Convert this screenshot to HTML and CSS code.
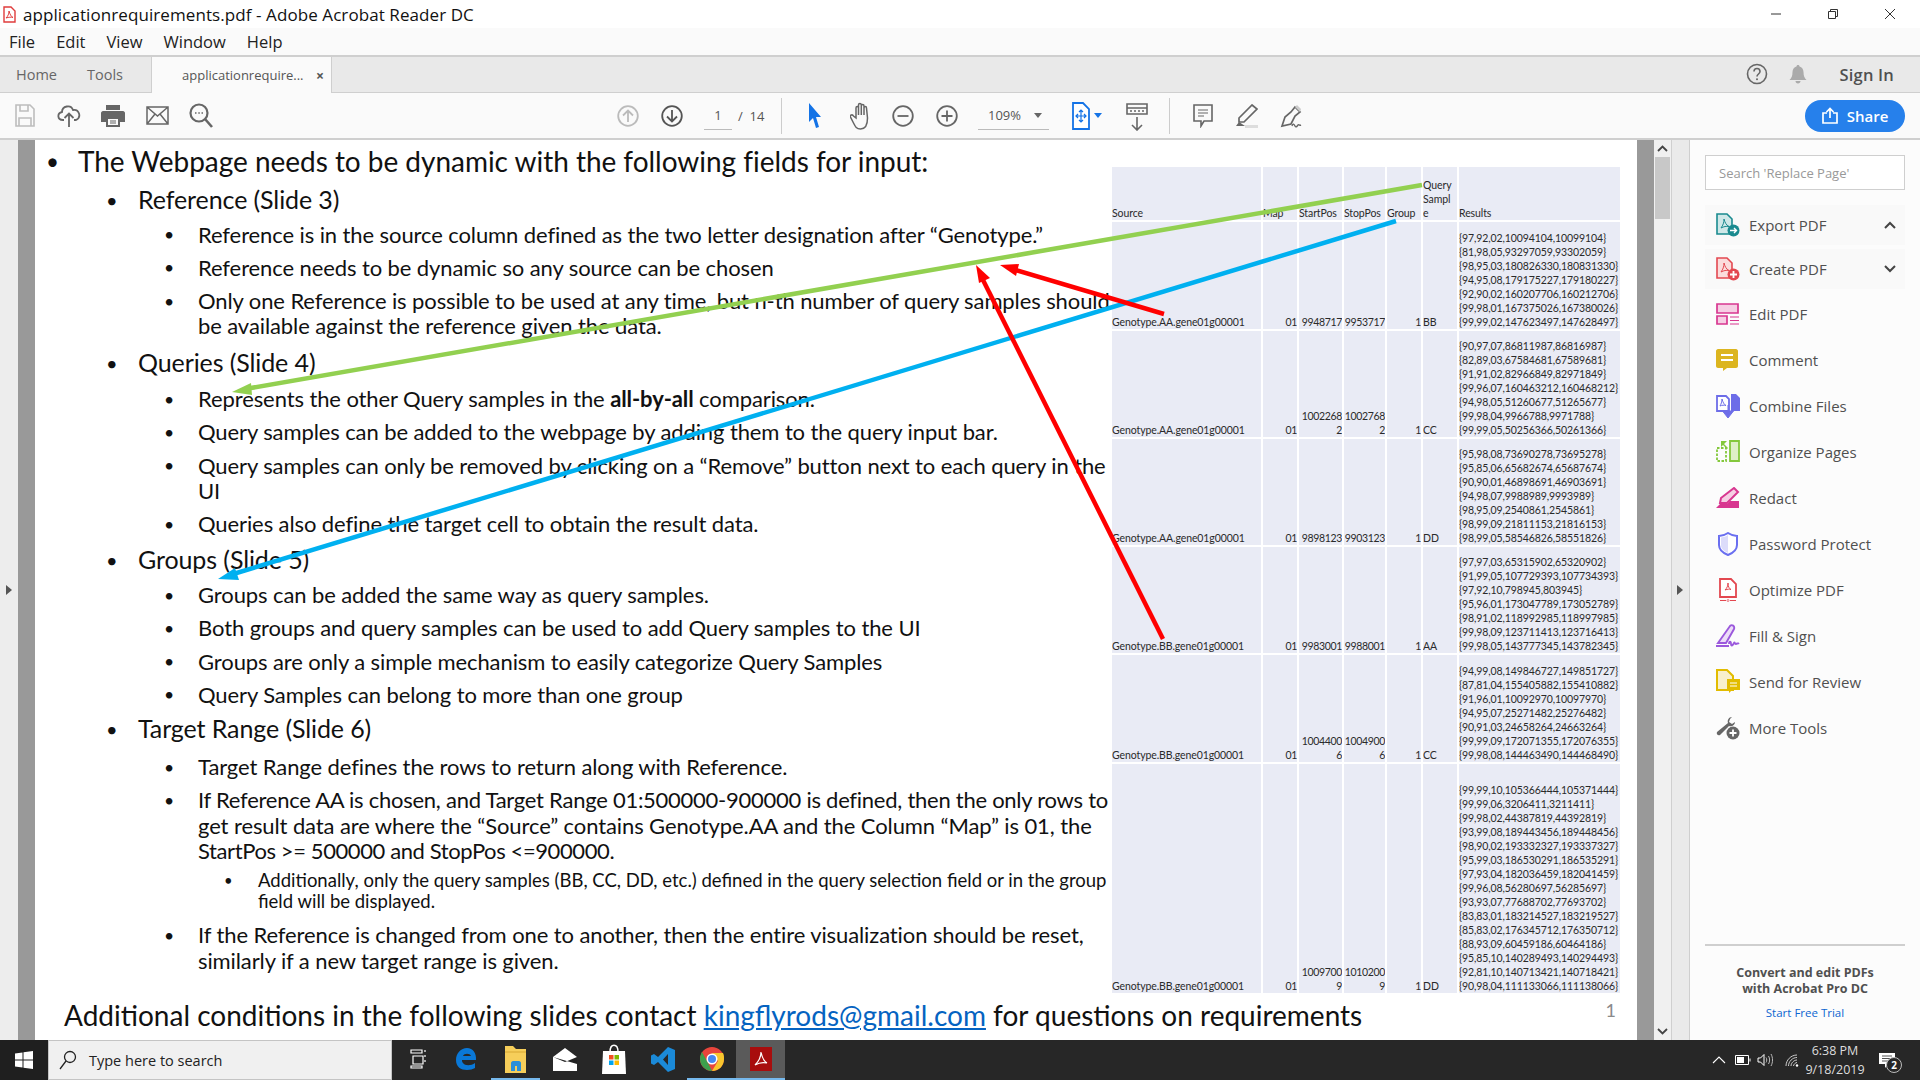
FILE: index.html
```html
<!DOCTYPE html>
<html lang="en">
<head>
  <meta charset="UTF-8" />
  <title>applicationrequirements.pdf - Adobe Acrobat Reader DC</title>
  <link rel="stylesheet" href="styles.css">
</head>
<body>

  <div class="titlebar">
    <svg class="title-icon" width="13" height="17" viewBox="0 0 13 17"><path d="M1 1h7l4 4v11H1z" fill="#fff" stroke="#e03c3c" stroke-width="1.4"/><path d="M6 5c0 3-1 5-3 7 3-1 5-1 7-.5-2-1-3-3-4-6.500z" fill="none" stroke="#e03c3c"/></svg>
    <span class="title-text">applicationrequirements.pdf - Adobe Acrobat Reader DC</span>
    <div class="win-btns">
      <svg width="12" height="12" viewBox="0 0 12 12"><path d="M1 6h10" stroke="#333"/></svg>
      <svg width="12" height="12" viewBox="0 0 12 12"><path d="M1.500 3.500h7v7h-7zM3.500 3.500v-2h7v7h-2" fill="none" stroke="#333"/></svg>
      <svg width="12" height="12" viewBox="0 0 12 12"><path d="M1 1l10 10M11 1L1 11" stroke="#333"/></svg>
    </div>
  </div>

  <div class="menubar">
    <span>File</span><span>Edit</span><span>View</span><span>Window</span><span>Help</span>
  </div>

  <div class="tabbar">
    <span class="tab-link tab-home">Home</span>
    <span class="tab-link tab-tools">Tools</span>
    <div class="tab-active"><span>applicationrequire...</span><b>×</b></div>
    <div class="tab-right">
      <svg width="22" height="22" viewBox="0 0 22 22"><circle cx="11" cy="11" r="9.500" fill="none" stroke="#666" stroke-width="1.600"/><path d="M8 8.500c0-4 6-4 6 0 0 2.500-3 2.500-3 5" fill="none" stroke="#666" stroke-width="1.600"/><circle cx="11" cy="16.200" r="1" fill="#666"/></svg>
      <svg class="bell" width="18" height="20" viewBox="0 0 18 20"><path d="M9 1c1 0 1.500.7 1.500 1.500C13 3.300 14.500 5.500 14.500 8c0 4 1 6 3 8H.5c2-2 3-4 3-8 0-2.500 1.500-4.700 4-5.500C7.500 1.700 8 1 9 1zM6.500 17h5c0 1.500-1 2.500-2.500 2.500S6.500 18.500 6.500 17z" fill="#aaa"/></svg>
      <span class="sign-in">Sign In</span>
    </div>
  </div>

  <div class="toolbar">
    <div class="tb-btn"><svg width="20" height="23" viewBox="0 0 20 23"><path d="M1 1h14l4 4v17H1z M5 1v6h8V1 M4 22v-8h12v8" fill="none" stroke="#bdbdbd" stroke-width="1.600"/></svg></div>
    <div class="tb-btn"><svg width="24" height="25" viewBox="0 0 24 25"><path d="M7 17H6c-6 0-6-7-1-8 0-6 9-8 11-2 6-1 9 7 3 10h-2" fill="none" stroke="#666" stroke-width="1.800"/><path d="M12 24V11M7.500 15l4.500-4.500 4.500 4.500" fill="none" stroke="#666" stroke-width="1.800"/></svg></div>
    <div class="tb-btn"><svg width="24" height="24" viewBox="0 0 24 24"><path d="M5 1h14v5H5zM2 7h20c1 0 2 1 2 2v9h-5v5H5v-5H0V9c0-1 1-2 2-2z" fill="#666"/><path d="M7 15h10v6H7z" fill="#fafafa"/><path d="M9 17h6M9 19h6" stroke="#666"/></svg></div>
    <div class="tb-btn"><svg width="23" height="19" viewBox="0 0 23 19"><path d="M1 1h21v17H1zM1 1l10.500 9L22 1M1 18l8-10M22 18l-8-10" fill="none" stroke="#666" stroke-width="1.500"/></svg></div>
    <div class="tb-btn"><svg width="24" height="25" viewBox="0 0 24 25"><circle cx="10" cy="10" r="8.500" fill="none" stroke="#666" stroke-width="2.200"/><path d="M16 16l7 8" stroke="#666" stroke-width="2.600"/><path d="M6 10h1.500M9.300 10h1.500M12.500 10H14" stroke="#666" stroke-width="1.600"/></svg></div>

    <div class="tb-btn tb-nav"><svg width="22" height="22" viewBox="0 0 22 22"><circle cx="11" cy="11" r="9.800" fill="none" stroke="#bbb" stroke-width="1.800"/><path d="M11 17V5.500M6 10.500l5-5 5 5" fill="none" stroke="#bbb" stroke-width="1.800"/></svg></div>
    <div class="tb-btn"><svg width="22" height="22" viewBox="0 0 22 22"><circle cx="11" cy="11" r="9.800" fill="none" stroke="#555" stroke-width="1.800"/><path d="M11 5v11.500M6 11.500l5 5 5-5" fill="none" stroke="#555" stroke-width="1.800"/></svg></div>
    <div class="page-field"><span class="page-num">1</span><span class="page-total">/ &nbsp;14</span></div>
    <div class="tb-sep"></div>
    <div class="tb-btn"><svg width="14" height="27" viewBox="0 0 14 27"><path d="M1 1l12 14H8l3 10-3 1-3-10-4 4z" fill="#1473e6"/></svg></div>
    <div class="tb-btn tb-hand"><svg width="22" height="28" viewBox="0 0 22 28"><path d="M6 16V6c0-2 2.500-2 2.500 0v7-10c0-2 2.800-2 2.800 0v10V4c0-2 2.700-2 2.700 0v9-7c0-2 2.500-2 2.500 0l1 10c0 6-2 11-7 11-4 0-5-2-7-6l-3-6c-1-2 2-3 3-1z" fill="none" stroke="#666" stroke-width="1.500"/></svg></div>
    <div class="tb-btn"><svg width="22" height="22" viewBox="0 0 22 22"><circle cx="11" cy="11" r="9.800" fill="none" stroke="#666" stroke-width="1.800"/><path d="M5.500 11h11" stroke="#666" stroke-width="1.800"/></svg></div>
    <div class="tb-btn"><svg width="22" height="22" viewBox="0 0 22 22"><circle cx="11" cy="11" r="9.800" fill="none" stroke="#666" stroke-width="1.800"/><path d="M5.500 11h11M11 5.500v11" stroke="#666" stroke-width="1.800"/></svg></div>
    <div class="zoom-field"><span>109%</span><i class="caret"></i></div>
    <div class="tb-btn tb-fit"><svg width="18" height="28" viewBox="0 0 18 28"><path d="M1 1h10l6 6v20H1z" fill="#fff" stroke="#1473e6" stroke-width="1.800"/><path d="M9 8v12M4 14h10M7 10l2-2 2 2M7 18l2 2 2-2M6 12l-2 2 2 2M12 12l2 2-2 2" fill="none" stroke="#1473e6" stroke-width="1.200"/></svg><i class="caret caret-blue"></i></div>
    <div class="tb-btn tb-read"><svg width="22" height="28" viewBox="0 0 22 28"><path d="M1 1h20v10H1zM1 5h20" fill="none" stroke="#666" stroke-width="1.600"/><path d="M4 8h2M8 8h2M12 8h2M16 8h2" stroke="#666" stroke-width="1.500"/><path d="M11 14v13M6 22l5 5 5-5" fill="none" stroke="#666" stroke-width="1.600"/></svg></div>
    <div class="tb-sep tb-sep2"></div>
    <div class="tb-btn"><svg width="20" height="24" viewBox="0 0 20 24"><path d="M1 1h18v16h-8l-3 5v-5H1z" fill="none" stroke="#666" stroke-width="1.600"/><path d="M5 6h10M5 9h10M5 12h6" stroke="#666"/></svg></div>
    <div class="tb-btn"><svg width="22" height="24" viewBox="0 0 22 24"><path d="M16 1l5 4L8 18H3v-4z" fill="none" stroke="#666" stroke-width="1.700"/><path d="M3 18l-3 4h9" fill="#666"/><path d="M9 21h13v3H9z" fill="#ddd"/></svg></div>
    <div class="tb-btn"><svg width="22" height="24" viewBox="0 0 22 24"><path d="M15 3l5 5-5 4-4 8-9 2 3-9 6-5z" fill="none" stroke="#666" stroke-width="1.700"/><path d="M15 3l2-2 4 4-1 3" fill="#ccc"/><path d="M12 22c1-3 2-2 3 0s2 0 3-1 1 1 3 0" fill="none" stroke="#666" stroke-width="1.400"/></svg></div>
    <div class="share"><svg width="16" height="17" viewBox="0 0 16 17"><path d="M5 6H1v10h14V6h-4" fill="none" stroke="#fff" stroke-width="1.700"/><path d="M8 11V1.500M4.500 5L8 1.500 11.500 5" fill="none" stroke="#fff" stroke-width="1.700"/></svg><span>Share</span></div>
  </div>

  <div class="main">
    <div class="nav-left"><i class="tri"></i></div>
    <div class="gray"></div>

    <div class="page">
      <div class="slide-top">
        <ul class="l1">
          <li>The Webpage needs to be dynamic with the following fields for input:
            <ul class="l2">
              <li>Reference (Slide 3)
                <ul class="l3">
                  <li>Reference is in the source column defined as the two letter designation after “Genotype.”</li>
                  <li>Reference needs to be dynamic so any source can be chosen</li>
                  <li>Only one Reference is possible to be used at any time, but n-th number of query samples should<br>be available against the reference given the data.</li>
                </ul>
              </li>
              <li>Queries (Slide 4)
                <ul class="l3">
                  <li>Represents the other Query samples in the <b>all-by-all</b> comparison.</li>
                  <li>Query samples can be added to the webpage by adding them to the query input bar.</li>
                  <li>Query samples can only be removed by clicking on a “Remove” button next to each query in the<br>UI</li>
                  <li>Queries also define the target cell to obtain the result data.</li>
                </ul>
              </li>
              <li>Groups (Slide 5)
                <ul class="l3">
                  <li>Groups can be added the same way as query samples.</li>
                  <li>Both groups and query samples can be used to add Query samples to the UI</li>
                  <li>Groups are only a simple mechanism to easily categorize Query Samples</li>
                  <li>Query Samples can belong to more than one group</li>
                </ul>
              </li>
              <li>Target Range (Slide 6)
                <ul class="l3">
                  <li>Target Range defines the rows to return along with Reference.</li>
                  <li><span class="tight">If Reference AA is chosen, and Target Range 01:500000-900000 is defined, then the only rows to</span><br>get result data are where the “Source” contains Genotype.AA and the Column “Map” is 01, the<br><span class="tighter">StartPos &gt;= 500000 and StopPos &lt;=900000.</span>
                    <ul class="l4">
                      <li>Additionally, only the query samples (BB, CC, DD, etc.) defined in the query selection field or in the group<br>field will be displayed.</li>
                    </ul>
                  </li>
                  <li>If the Reference is changed from one to another, then the entire visualization should be reset,<br>similarly if a new target range is given.</li>
                </ul>
              </li>
            </ul>
          </li>
        </ul>

        <table class="data">
          <colgroup><col class="c1"><col class="c2"><col class="c3"><col class="c4"><col class="c5"><col class="c6"><col class="c7"></colgroup>
          <tr class="r-head"><td>Source</td><td>Map</td><td>StartPos</td><td>StopPos</td><td>Group</td><td>Query<br>Sampl<br>e</td><td>Results</td></tr>
          <tr class="r1"><td>Genotype.AA.gene01g00001</td><td class="num">01</td><td class="num">9948717</td><td class="num">9953717</td><td class="num">1</td><td>BB</td><td>{97,92,02,10094104,10099104}<br>{81,98,05,93297059,93302059}<br>{98,95,03,180826330,180831330}<br>{94,95,08,179175227,179180227}<br>{92,90,02,160207706,160212706}<br>{99,98,01,167375026,167380026}<br>{99,99,02,147623497,147628497}</td></tr>
          <tr class="r2"><td>Genotype.AA.gene01g00001</td><td class="num">01</td><td class="num">1002268<br>2</td><td class="num">1002768<br>2</td><td class="num">1</td><td>CC</td><td>{90,97,07,86811987,86816987}<br>{82,89,03,67584681,67589681}<br>{91,91,02,82966849,82971849}<br>{99,96,07,160463212,160468212}<br>{94,98,05,51260677,51265677}<br>{99,98,04,9966788,9971788}<br>{99,99,05,50256366,50261366}</td></tr>
          <tr class="r3"><td>Genotype.AA.gene01g00001</td><td class="num">01</td><td class="num">9898123</td><td class="num">9903123</td><td class="num">1</td><td>DD</td><td>{95,98,08,73690278,73695278}<br>{95,85,06,65682674,65687674}<br>{90,90,01,46898691,46903691}<br>{94,98,07,9988989,9993989}<br>{98,95,09,2540861,2545861}<br>{98,99,09,21811153,21816153}<br>{98,99,05,58546826,58551826}</td></tr>
          <tr class="r4"><td>Genotype.BB.gene01g00001</td><td class="num">01</td><td class="num">9983001</td><td class="num">9988001</td><td class="num">1</td><td>AA</td><td>{97,97,03,65315902,65320902}<br>{91,99,05,107729393,107734393}<br>{97,92,10,798945,803945}<br>{95,96,01,173047789,173052789}<br>{98,91,02,118992985,118997985}<br>{99,98,09,123711413,123716413}<br>{99,98,05,143777345,143782345}</td></tr>
          <tr class="r5"><td>Genotype.BB.gene01g00001</td><td class="num">01</td><td class="num">1004400<br>6</td><td class="num">1004900<br>6</td><td class="num">1</td><td>CC</td><td>{94,99,08,149846727,149851727}<br>{87,81,04,155405882,155410882}<br>{91,96,01,10092970,10097970}<br>{94,95,07,25271482,25276482}<br>{90,91,03,24658264,24663264}<br>{99,99,09,172071355,172076355}<br>{99,98,08,144463490,144468490}</td></tr>
          <tr class="r6"><td>Genotype.BB.gene01g00001</td><td class="num">01</td><td class="num">1009700<br>9</td><td class="num">1010200<br>9</td><td class="num">1</td><td>DD</td><td>{99,99,10,105366444,105371444}<br>{99,99,06,3206411,3211411}<br>{99,98,02,44387819,44392819}<br>{93,99,08,189443456,189448456}<br>{98,90,02,193332327,193337327}<br>{95,99,03,186530291,186535291}<br>{97,93,04,182036459,182041459}<br>{99,96,08,56280697,56285697}<br>{93,93,07,77688702,77693702}<br>{83,83,01,183214527,183219527}<br>{85,83,02,176345712,176350712}<br>{88,93,09,60459186,60464186}<br>{95,85,10,140289493,140294493}<br>{92,81,10,140713421,140718421}<br>{90,98,04,111133066,111138066}</td></tr>
        </table>
      </div>

      <div class="slide-foot">
        <span>Additional conditions in the following slides contact <a>kingflyrods@gmail.com</a> for questions on requirements</span>
        <span class="slide-num">1</span>
      </div>

      <!-- arrows drawn on the slide, coords are window px -->
      <svg class="arrows" viewBox="35 140 1602 900" width="1602" height="900">
        <path d="M1422 185L245 389" stroke="#92d050" stroke-width="4.500"/>
        <path d="M232 392l19-9 1 12z" fill="#92d050"/>
        <path d="M1396 221L230 575" stroke="#00b0f0" stroke-width="4.500"/>
        <path d="M218 579l17-11 4 12z" fill="#00b0f0"/>
        <path d="M1164 314L1012 269" stroke="#f00" stroke-width="4.500"/>
        <path d="M1000 265l19-1-3 12z" fill="#f00"/>
        <path d="M1163 639L981 276" stroke="#f00" stroke-width="4.500"/>
        <path d="M976 265l14 13-11 5z" fill="#f00"/>
      </svg>
    </div>

    <div class="gray gray-r"></div>
    <div class="scroll">
      <svg width="11" height="7" viewBox="0 0 11 7"><path d="M1 6l4.500-4.500L10 6" fill="none" stroke="#444" stroke-width="1.800"/></svg>
      <div class="thumb"></div>
      <svg class="scroll-down" width="11" height="7" viewBox="0 0 11 7"><path d="M1 1l4.500 4.500L10 1" fill="none" stroke="#444" stroke-width="1.800"/></svg>
    </div>
    <div class="nav-right"><i class="tri"></i></div>

    <div class="panel">
      <div class="search">Search 'Replace Page'</div>
      <div class="tool tool-box">
        <svg width="24" height="24" viewBox="0 0 24 24"><path d="M1 1h10l5 5v15H1z" fill="#cfe8e8" stroke="#1a8a8f" stroke-width="1.600"/><path d="M8 6c0 4-1 6-3 9 3-1.500 5-2 8-1.500-3-1.500-4-4-5-7.500z" fill="none" stroke="#1a8a8f"/><circle cx="17.500" cy="17.500" r="6" fill="#1a8a8f"/><path d="M14 17.500h6M18 15l2.500 2.500L18 20" fill="none" stroke="#fff" stroke-width="1.400"/></svg>
        <span>Export PDF</span>
        <svg class="chev" width="12" height="8" viewBox="0 0 12 8"><path d="M1 7l5-5 5 5" fill="none" stroke="#444" stroke-width="2"/></svg>
      </div>
      <div class="tool tool-box tool-gap">
        <svg width="24" height="24" viewBox="0 0 24 24"><path d="M1 1h10l5 5v15H1z" fill="#fbdcdc" stroke="#e34850" stroke-width="1.600"/><path d="M8 6c0 4-1 6-3 9 3-1.500 5-2 8-1.500-3-1.500-4-4-5-7.500z" fill="none" stroke="#e34850"/><circle cx="17.500" cy="17.500" r="6" fill="#e34850"/><path d="M14 17.500h7M17.500 14v7" stroke="#fff" stroke-width="1.800"/></svg>
        <span>Create PDF</span>
        <svg class="chev" width="12" height="8" viewBox="0 0 12 8"><path d="M1 1l5 5 5-5" fill="none" stroke="#444" stroke-width="2"/></svg>
      </div>
      <div class="tool">
        <svg width="24" height="24" viewBox="0 0 24 24"><path d="M1 2h21v9H1zM1 14h10v8H1z" fill="#f6cfe4" stroke="#d83790" stroke-width="1.700"/><path d="M14 15h9M14 18.500h9M14 22h9" stroke="#d83790" stroke-width="1.200"/></svg>
        <span>Edit PDF</span>
      </div>
      <div class="tool">
        <svg width="24" height="24" viewBox="0 0 24 24"><path d="M2 1h18c1 0 2 1 2 2v15c0 1-1 2-2 2h-9l-4 3v-3H2c-1 0-2-1-2-2V3c0-1 1-2 2-2z" fill="#dcb51f"/><path d="M5 7h12M5 12h12" stroke="#fff" stroke-width="2"/></svg>
        <span>Comment</span>
      </div>
      <div class="tool">
        <svg width="24" height="26" viewBox="0 0 24 26"><path d="M1 3h9l3 3v12H1z" fill="#fff" stroke="#6d6de8" stroke-width="1.800"/><path d="M15 1h5l4 4v13h-9z" fill="#6d6de8"/><path d="M6 6c0 3-1 5-2 7 2-1 4-1 6-.5-2-1-3-3-4-6.500z" fill="none" stroke="#6d6de8"/><path d="M12 12v10M6.500 18h11L12 25z" fill="#6d6de8" stroke="#6d6de8"/></svg>
        <span>Combine Files</span>
      </div>
      <div class="tool">
        <svg width="24" height="24" viewBox="0 0 24 24"><path d="M14 1h9v20h-9z" fill="#dff0c8" stroke="#84c83c" stroke-width="1.800"/><path d="M1 8h9v13H1z" fill="none" stroke="#84c83c" stroke-width="1.800" stroke-dasharray="2.500 1.500"/><path d="M11 1L5 1l0 6 2-2 4 4 1-1-4-4z" fill="#84c83c"/></svg>
        <span>Organize Pages</span>
      </div>
      <div class="tool">
        <svg width="24" height="22" viewBox="0 0 24 22"><path d="M18 1l4 4L11 16H4l1-5z" fill="#f6cfe4" stroke="#d83790" stroke-width="2"/><path d="M0 21l4-4h7l3-3h9v7z" fill="#d83790"/></svg>
        <span>Redact</span>
      </div>
      <div class="tool">
        <svg width="20" height="24" viewBox="0 0 20 24"><path d="M10 1c3 2 6 3 9 3v9c0 5-4 8-9 10-5-2-9-5-9-10V4c3 0 6-1 9-3z" fill="#fff" stroke="#6a6ff0" stroke-width="2"/><path d="M10 3c-2 1.500-4 2-7 2.500V13c0 4 3 6 7 8z" fill="#dcdcfa"/></svg>
        <span>Password Protect</span>
      </div>
      <div class="tool">
        <svg width="20" height="24" viewBox="0 0 20 24"><path d="M2 1h11l5 5v13H2z" fill="#fff" stroke="#e34850" stroke-width="1.800"/><path d="M10 5c0 3-1 5-3 7 3-1 4-1 6-.5-2-1-3-3-3-6.500z" fill="none" stroke="#e34850"/><path d="M2 22.500h6M12 22.500h6" stroke="#e34850"/><circle cx="10" cy="22.500" r="1" fill="none" stroke="#e34850" stroke-width=".7"/></svg>
        <span>Optimize PDF</span>
      </div>
      <div class="tool">
        <svg width="24" height="24" viewBox="0 0 24 24"><path d="M14 2c2-2 5 0 4 3L10 19H2z" fill="#ecdcf8" stroke="#9b59dc" stroke-width="1.900"/><path d="M0 22h13M13 20c0-3 2-3 2 0s2 1 3-1 1 2 2 1 2 0 3-1" fill="none" stroke="#9b59dc" stroke-width="1.800"/></svg>
        <span>Fill &amp; Sign</span>
      </div>
      <div class="tool">
        <svg width="24" height="26" viewBox="0 0 24 26"><path d="M1 1h10l6 6v14H1z" fill="#f8f0cc" stroke="#e2bc00" stroke-width="2"/><path d="M11 10h13v11h-8l-3 3v-3h-2z" fill="#e2bc00"/><path d="M14 14h7M14 17h7" stroke="#fff"/></svg>
        <span>Send for Review</span>
      </div>
      <div class="tool">
        <svg width="24" height="24" viewBox="0 0 24 24"><path d="M16 1c-3 0-5 3-4 6L1 16c-1 2 1 4 3 3l9-9c3 1 6-1 6-4l-3 2-3-2 1-3z" fill="#666"/><circle cx="17" cy="17" r="6.500" fill="#666"/><path d="M13.500 17h7M17 13.500v7" stroke="#fff" stroke-width="1.800"/></svg>
        <span>More Tools</span>
      </div>

      <div class="promo">
        <div class="promo-text">Convert and edit PDFs<br>with Acrobat Pro DC</div>
        <a class="promo-link">Start Free Trial</a>
      </div>
    </div>
  </div>

  <div class="taskbar">
    <div class="start"><svg width="18" height="18" viewBox="0 0 18 18"><path d="M0 2.500l7.500-1v7H0zM8.500 1.300L18 0v8.500H8.500zM0 9.500h7.500v7L0 15.500zM8.500 9.500H18V18l-9.500-1.300z" fill="#fff"/></svg></div>
    <div class="tsearch">
      <svg width="18" height="20" viewBox="0 0 18 20"><circle cx="11" cy="7" r="5.500" fill="none" stroke="#222" stroke-width="1.300"/><path d="M7 11l-6 8" stroke="#222" stroke-width="1.300"/></svg>
      <span>Type here to search</span>
    </div>
    <div class="tapps">
      <div class="tapp"><svg width="16" height="20" viewBox="0 0 16 20"><path d="M1 1h11v3H1zM3 7h10v8H3zM1 17h11v2H1zM15 1v2M15 6v2M15 11v2" fill="none" stroke="#fff" stroke-width="1.200"/></svg></div>
      <div class="tapp"><svg width="22" height="24" viewBox="0 0 22 24"><path d="M2 13h18c.500-7-3-12-9-12C5 1 0 6 0 13c0 7 5 10 11 10 3 0 6-1 8-2v-5c-4 3-10 3-12 0-1-1-1-2-1-3zm5-4c1-3 7-3 8 0z" fill="#0a78d7" fill-rule="evenodd"/></svg></div>
      <div class="tapp tapp-open"><svg width="22" height="27" viewBox="0 0 22 27"><path d="M0 0h8l3 3h10v24H0z" fill="#f6ce5a"/><path d="M0 6h21" stroke="#d8a832"/><path d="M6 25v-8c0-1 1-2 2-2h6c1 0 2 1 2 2v8h-4v-5h-2v5z" fill="#2a8fd8"/></svg></div>
      <div class="tapp"><svg width="24" height="23" viewBox="0 0 24 23"><path d="M0 9L12 0l12 9v14H0z" fill="#fff"/><path d="M0 9l24 7V9L12 14z" fill="#222"/></svg></div>
      <div class="tapp"><svg width="24" height="30" viewBox="0 0 24 30"><path d="M8 8c0-9 8-9 8 0" fill="none" stroke="#fff" stroke-width="1.400"/><path d="M1 7h22l1 23H0z" fill="#fff"/><path d="M7 11h4.500v4.500H7z" fill="#f25022"/><path d="M12.500 11H17v4.500h-4.500z" fill="#7fba00"/><path d="M7 16.500h4.500V21H7z" fill="#00a4ef"/><path d="M12.500 16.500H17V21h-4.500z" fill="#ffb900"/></svg></div>
      <div class="tapp"><svg width="24" height="25" viewBox="0 0 24 25"><path d="M17 0l7 3v19l-7 3L7 15l-4 3-3-1.500v-8L3 7l4 3zm0 7l-5 5.500 5 5.500z" fill="#1b8ad8" fill-rule="evenodd"/></svg></div>
      <div class="tapp tapp-open"><svg width="24" height="24" viewBox="0 0 24 24"><circle cx="12" cy="12" r="12" fill="#e8453c"/><path d="M12 24C5 24 0 18 0 12c0-3 1-5 2-7l6 11z" fill="#3da04c"/><path d="M12 6h11c1 2 1 4 1 6 0 7-5 12-12 12l6-10z" fill="#f8c52d"/><circle cx="12" cy="12" r="5.500" fill="#fff"/><circle cx="12" cy="12" r="4" fill="#4688f1"/></svg></div>
      <div class="tapp tapp-on"><svg width="22" height="24" viewBox="0 0 22 24"><path d="M0 0h22v24H0z" fill="#a80d0d"/><path d="M11 5c0 5-2 9-6 13 5-3 8-3 12-2-4-2-5-6-6-11z" fill="none" stroke="#fff" stroke-width="1.200"/></svg></div>
    </div>
    <div class="tray">
      <svg width="14" height="8" viewBox="0 0 14 8"><path d="M1 7l6-6 6 6" fill="none" stroke="#fff" stroke-width="1.100"/></svg>
      <svg class="batt" width="16" height="10" viewBox="0 0 16 10"><path d="M.5.500h13v9H.5z" fill="none" stroke="#fff"/><path d="M2 2h7v6H2z" fill="#fff"/><path d="M14.500 3.500h1v3h-1z" fill="#fff"/></svg>
      <svg class="vol" width="16" height="14" viewBox="0 0 16 14"><path d="M1 5h2.500L7 1.500v11L3.500 9H1z" fill="none" stroke="#fff"/><path d="M9 4.500c1 1.500 1 3.500 0 5M11.500 3c1.500 2.500 1.500 5.500 0 8M14 1c2 3.500 2 8.500 0 12" fill="none" stroke="#bbb"/></svg>
      <svg class="wifi" width="14" height="13" viewBox="0 0 14 13"><path d="M1 12c0-6 5-11 11-11M3.500 12c0-4.500 4-8.500 8.500-8.500M6 12c0-3 3-6 6-6M8.500 12c0-1.500 2-3.500 3.500-3.500" fill="none" stroke="#ccc"/><circle cx="12" cy="11.500" r="1.200" fill="#fff"/></svg>
      <div class="clock">6:38 PM<br>9/18/2019</div>
      <div class="notif">
        <svg width="16" height="15" viewBox="0 0 16 15"><path d="M0 0h16v11H9l-3 4v-4H0z" fill="#fff"/><path d="M3 3h10M3 5.500h10M3 8h6" stroke="#262626" stroke-width=".8"/></svg>
        <b>2</b>
      </div>
    </div>
  </div>

</body>
</html>
```

FILE: styles.css
```css
* {
  box-sizing: border-box;
}

html, body {
  margin: 0;
  height: 1080px;
  overflow: hidden;
}

body {
  display: flex;
  flex-direction: column;
  font-family: 'Open Sans', sans-serif;
  color: #333;
  background: #fff;
}

svg {
  display: block;
  flex: none;
}

/* window chrome */
.titlebar {
  height: 28px;
  display: flex;
  align-items: center;
  padding-left: 3px;
  background: #fff;
}

.title-text {
  margin-left: 7px;
  font-size: 17px;
  color: #111;
  letter-spacing: 0.08px;
}

.win-btns {
  margin-left: auto;
  display: flex;
  gap: 45px;
  padding-right: 24px;
}

.menubar {
  height: 29px;
  display: flex;
  align-items: center;
  gap: 21px;
  padding-left: 9px;
  background: #fafafa;
  border-bottom: 2px solid #cfcfcf;
  font-size: 16.500px;
  color: #222;
}

.tabbar {
  height: 36px;
  display: flex;
  align-items: stretch;
  background: #e9e9e9;
  border-bottom: 1px solid #cfcfcf;
  font-size: 14.5px;
  color: #666;
}

.tab-link {
  display: flex;
  align-items: center;
}

.tab-home {
  margin-left: 16px;
}

.tab-tools {
  margin-left: 30px;
}

.tab-active {
  margin-left: 28px;
  width: 181px;
  height: 36px;
  display: flex;
  align-items: center;
  justify-content: space-between;
  padding: 0 7px 0 30px;
  background: #fafafa;
  border-left: 1px solid #cfcfcf;
  border-right: 1px solid #cfcfcf;
  font-size: 13px;
  color: #555;
}

.tab-active b {
  font-size: 14px;
  color: #555;
}

.tab-right {
  margin-left: auto;
  display: flex;
  align-items: center;
  padding-right: 26px;
  padding-bottom: 1px;
}

.bell {
  margin-left: 21px;
}

.sign-in {
  margin-left: 32px;
  font-weight: 600;
  font-size: 16.500px;
  letter-spacing: 0.2px;
  color: #505050;
}

.toolbar {
  height: 47px;
  display: flex;
  align-items: center;
  padding-left: 3px;
  background: #fafafa;
  border-bottom: 2px solid #cfcfcf;
}

.tb-btn {
  width: 44px;
  height: 44px;
  flex: none;
  display: flex;
  align-items: center;
  justify-content: center;
  gap: 4px;
}

.tb-nav {
  margin-left: 383px;
}

.page-field {
  width: 78px;
  display: flex;
  margin-left: 10px;
  font-size: 13px;
  color: #555;
  align-items: center;
}

.page-num {
  width: 28px;
  height: 28px;
  line-height: 26px;
  text-align: center;
  border-bottom: 1px solid #bbb;
}

.page-total {
  margin-left: 6px;
}

.tb-sep {
  width: 1px;
  height: 36px;
  background: #ccc;
  margin: 0 11px 0 -1px;
}

.tb-hand {
  padding-left: 3px;
}

.zoom-field {
  width: 71px;
  height: 28px;
  margin-left: 9px;
  display: flex;
  align-items: center;
  justify-content: space-between;
  padding: 0 7px 0 10px;
  border-bottom: 1px solid #bbb;
  font-size: 13px;
  color: #555;
}

.caret {
  width: 0;
  height: 0;
  border-left: 4px solid transparent;
  border-right: 4px solid transparent;
  border-top: 5px solid #666;
}

.caret-blue {
  border-top-color: #1473e6;
}

.tb-fit {
  margin-left: 10px;
  padding-left: 11px;
}

.tb-read {
  margin-left: 12px;
  padding-top: 2px;
}

.tb-sep2 {
  margin-left: 10px;
}

.share {
  margin-left: auto;
  margin-right: 15px;
  width: 100px;
  height: 32px;
  border-radius: 16px;
  background: #2680eb;
  color: #fff;
  font-weight: 600;
  font-size: 15px;
  display: flex;
  align-items: center;
  justify-content: center;
  gap: 9px;
}

/* work area */
.main {
  height: 900px;
  display: flex;
  background: #999;
}

.nav-left {
  width: 18px;
  background: #ededed;
  display: flex;
  align-items: center;
  padding-left: 6px;
}

.tri {
  width: 0;
  height: 0;
  border-top: 5px solid transparent;
  border-bottom: 5px solid transparent;
  border-left: 6px solid #555;
}

.gray {
  width: 17px;
  background: #999;
}

.page {
  width: 1602px;
  height: 900px;
  position: relative;
  background: #fff;
  font-family: Lato, 'Open Sans', sans-serif;
  color: #111;
  white-space: nowrap;
}

.slide-top {
  display: flex;
  height: 855px;
}

ul {
  list-style: none;
  margin: 0;
  padding: 0;
}

li::before {
  content: "•";
  display: inline-block;
  font-size: 0.8em;
  line-height: 1;
  vertical-align: 0.07em;
}

.l1 {
  flex: 1;
  min-width: 0;
  padding: 4px 0 0 43px;
  font-size: 28px;
  line-height: 34px;
  letter-spacing: -0.03px;
}

.l1 > li::before {
  width: 32px;
  margin-left: -32px;
}

.l2 {
  padding-left: 60px;
  font-size: 25px;
  line-height: 30px;
  letter-spacing: -0.1px;
}

.l2 > li {
  margin-top: 6px;
}

.l2 > li:nth-child(2) {
  margin-top: 8.400px;
}

.l2 > li:nth-child(3) {
  margin-top: 7.600px;
}

.l2 > li::before {
  width: 32px;
  margin-left: -32px;
}

.l3 {
  padding: 1.600px 0 0 60px;
  font-size: 22px;
  line-height: 25.500px;
}

.l2 > li:first-child > .l3 {
  padding-top: 0;
}

.l2 > li:nth-child(3) > .l3 {
  padding-top: 0.500px;
}

.l2 > li:last-child > .l3 {
  padding-top: 3.400px;
}

.l3 > li {
  margin-top: 7.600px;
}

.l3 > li::before {
  width: 34px;
  margin-left: -34px;
}

.tight {
  letter-spacing: -0.260px;
}

.tighter {
  letter-spacing: -0.4px;
}

.l4 {
  padding: 0 0 2.500px 60px;
  font-size: 18.500px;
  line-height: 21px;
  letter-spacing: 0;
}

.l4 > li {
  margin-top: 6.500px;
}

.l4 > li::before {
  width: 34px;
  margin-left: -34px;
}

/* the pasted spreadsheet */
.data {
  flex: none;
  table-layout: fixed;
  width: 512px;
  height: 830px;
  margin: 25px 15px 0 0;
  border-collapse: separate;
  border-spacing: 2px;
  font-size: 10.500px;
  line-height: 14px;
  color: #2a2a2a;
  letter-spacing: -0.1px;
}

.data td {
  padding: 0;
  background: #e9ebf5;
  vertical-align: bottom;
  overflow: hidden;
}

.c1 { width: 149px; }
.c2 { width: 34px; }
.c3 { width: 43px; }
.c4 { width: 41px; }
.c5 { width: 34px; }
.c6 { width: 34px; }
.c7 { width: 161px; }

.r-head { height: 53px; }
.r1, .r5 { height: 107px; }
.r2, .r3, .r4 { height: 106px; }
.r6 { height: 229px; }

.data .num {
  text-align: right;
  letter-spacing: -0.35px;
}

.slide-foot {
  display: flex;
  align-items: flex-start;
  justify-content: space-between;
  padding: 3px 21px 0 29px;
  font-size: 28px;
  line-height: 34px;
}

.slide-foot a {
  color: #0563c1;
  text-decoration: underline;
}

.slide-num {
  font-size: 18px;
  line-height: 24px;
  color: #8a8a8a;
}

.arrows {
  position: absolute;
  left: 0;
  top: 0;
  fill: none;
  pointer-events: none;
}

.gray-r {
  width: 17px;
}

.scroll {
  width: 18px;
  background: #f0f0f0;
  border-right: 1px solid #cfcfcf;
  display: flex;
  flex-direction: column;
  align-items: center;
  padding-top: 5px;
}

.thumb {
  width: 15px;
  height: 62px;
  margin-top: 5px;
  background: #c8c8c8;
}

.scroll-down {
  margin-top: auto;
  margin-bottom: 5px;
}

.nav-right {
  width: 18px;
  background: #eaeaea;
  border-right: 1px solid #cfcfcf;
  display: flex;
  align-items: center;
  padding-left: 5px;
}

.panel {
  width: 230px;
  background: #fcfcfc;
  padding: 15px 15px 0;
  display: flex;
  flex-direction: column;
  color: #505050;
}

.search {
  height: 35px;
  line-height: 34px;
  padding-left: 13px;
  background: #fff;
  border: 1px solid #cfcfcf;
  font-size: 13px;
  color: #999;
  margin-bottom: 15px;
}

.tool {
  height: 46px;
  flex: none;
  display: flex;
  align-items: center;
  padding-left: 11px;
  font-size: 15px;
}

.tool svg:first-child {
  width: 24px;
}

.tool > span {
  margin-left: 9px;
}

.tool-box {
  height: 40px;
  background: #f9f9f9;
}

.tool-gap {
  margin: 4px 0 2px;
}

.chev {
  margin-left: auto;
  margin-right: 9px;
}

.promo {
  margin-top: auto;
  height: 96px;
  border-top: 2px solid #cfcfcf;
  text-align: center;
  padding-top: 19px;
}

.promo-text {
  font-weight: 700;
  font-size: 12.500px;
  line-height: 16px;
  color: #505050;
}

.promo-link {
  display: block;
  margin-top: 8px;
  font-size: 11.500px;
  color: #0d66d0;
}

/* windows taskbar */
.taskbar {
  height: 40px;
  display: flex;
  align-items: stretch;
  background: #272727;
  color: #fff;
}

.start {
  width: 48px;
  background: #1f1f1f;
  display: flex;
  align-items: center;
  justify-content: center;
}

.tsearch {
  width: 344px;
  display: flex;
  align-items: center;
  padding-left: 10px;
  background: #f0f0f0;
  border: 1px solid #c4c4c4;
  color: #222;
  font-size: 14.500px;
}

.tsearch span {
  margin-left: 12px;
}

.tapps {
  display: flex;
}

.tapp {
  width: 49px;
  display: flex;
  align-items: center;
  justify-content: center;
  border-bottom: 2px solid transparent;
}

.tapp:first-child {
  margin-left: 1px;
}

.tapp-open {
  border-bottom-color: #76b9ed;
}

.tapp-on {
  background: #5a5a5a;
  border-bottom-color: #76b9ed;
}

.tray {
  margin-left: auto;
  display: flex;
  align-items: center;
  padding-right: 15px;
}

.batt {
  margin-left: 9px;
}

.vol {
  margin-left: 6px;
}

.wifi {
  margin-left: 12px;
}

.clock {
  width: 68px;
  margin: 0 10px 0 2px;
  text-align: center;
  font-size: 12.500px;
  line-height: 19px;
  color: #ddd;
}

.notif {
  position: relative;
  width: 26px;
}

.notif b {
  position: absolute;
  left: 7px;
  top: 4px;
  width: 16px;
  height: 16px;
  border-radius: 50%;
  background: #272727;
  border: 1px solid #bbb;
  font-size: 10px;
  line-height: 14px;
  text-align: center;
}
```
